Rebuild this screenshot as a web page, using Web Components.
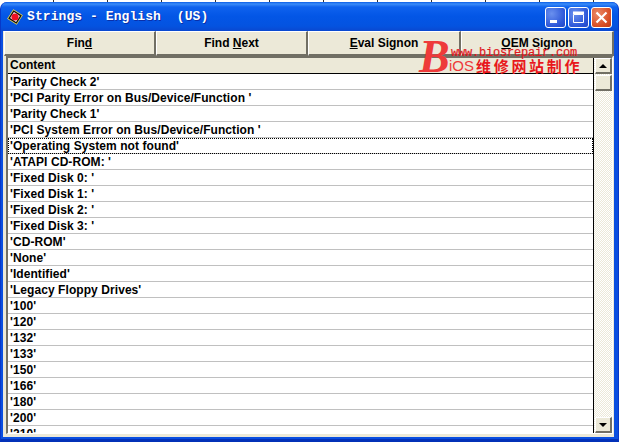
<!DOCTYPE html>
<html>
<head>
<meta charset="utf-8">
<style>
  html, body { margin: 0; padding: 0; width: 620px; height: 442px; overflow: hidden; background: #fff; }
</style>
</head>
<body>
<xp-window>
  <xp-titlebar slot="title">Strings - English&nbsp;&nbsp;(US)</xp-titlebar>
  <tool-button><span>Fin<u>d</u></span></tool-button>
  <tool-button><span>Find <u>N</u>ext</span></tool-button>
  <tool-button><span><u>E</u>val Signon</span></tool-button>
  <tool-button><span><u>O</u>EM Signon</span></tool-button>
  <string-list slot="list">
    <string-row><span>'Parity Check 2'</span></string-row>
    <string-row><span>'PCI Parity Error on Bus/Device/Function '</span></string-row>
    <string-row><span>'Parity Check 1'</span></string-row>
    <string-row><span>'PCI System Error on Bus/Device/Function '</span></string-row>
    <string-row focused><span>'Operating System not found'</span></string-row>
    <string-row><span>'ATAPI CD-ROM: '</span></string-row>
    <string-row><span>'Fixed Disk 0: '</span></string-row>
    <string-row><span>'Fixed Disk 1: '</span></string-row>
    <string-row><span>'Fixed Disk 2: '</span></string-row>
    <string-row><span>'Fixed Disk 3: '</span></string-row>
    <string-row><span>'CD-ROM'</span></string-row>
    <string-row><span>'None'</span></string-row>
    <string-row><span>'Identified'</span></string-row>
    <string-row><span>'Legacy Floppy Drives'</span></string-row>
    <string-row><span>'100'</span></string-row>
    <string-row><span>'120'</span></string-row>
    <string-row><span>'132'</span></string-row>
    <string-row><span>'133'</span></string-row>
    <string-row><span>'150'</span></string-row>
    <string-row><span>'166'</span></string-row>
    <string-row><span>'180'</span></string-row>
    <string-row><span>'200'</span></string-row>
    <string-row><span>'210'</span></string-row>
  </string-list>
  <bios-mark slot="mark"></bios-mark>
</xp-window>

<script>
class XpWindow extends HTMLElement {
  constructor() {
    super();
    const shadow = this.attachShadow({ mode: 'open' });
    shadow.innerHTML = `
      <style>
        :host { display: block; width: 620px; height: 442px; position: relative; background: #fff; overflow: hidden; }
        .ticks { height: 2px; background: repeating-linear-gradient(90deg, #fff 0 53px, #333 53px 54px); }
        .frame {
          height: 440px; box-sizing: border-box; margin-right: 1px;
          display: flex; flex-direction: column;
          background: #0a4fe0; border-radius: 7px 7px 0 0;
          border-bottom: 3px solid #0331b8; border-left: 1px solid #0838c8; border-right: 1px solid #0838c8;
        }
        .body {
          flex: 1; margin: 0 4px 2px 2px; min-height: 0;
          background: #ece9d8; display: flex; flex-direction: column;
        }
        .tools { display: grid; grid-template-columns: 152px 152px 153px 153px; height: 25px; padding-left: 1px; }
        .content { flex: 1; min-height: 0; padding: 0 1px 3px 3px; display: flex; }
        .mark { position: absolute; left: 418px; top: 40px; }
      </style>
      <div class="ticks"></div>
      <div class="frame">
        <slot name="title"></slot>
        <div class="body">
          <div class="tools"><slot></slot></div>
          <div class="content"><slot name="list"></slot></div>
        </div>
      </div>
      <div class="mark"><slot name="mark"></slot></div>
    `;
  }
}

class XpTitlebar extends HTMLElement {
  constructor() {
    super();
    const shadow = this.attachShadow({ mode: 'open' });
    shadow.innerHTML = `
      <style>
        :host {
          display: flex; align-items: center; height: 29px; flex: none; padding: 0 6px 0 6px;
          border-radius: 7px 7px 0 0;
          background: linear-gradient(180deg, #0a5ee8 0, #3b8cf8 2px, #0f62ee 5px, #0356e6 14px, #0453e0 24px, #0a48d0 29px);
        }
        .icon { width: 16px; height: 16px; flex: none; margin: 1px 4px 0 0; }
        .text {
          flex: 1; color: #fff; white-space: pre; padding-top: 1px;
          font: bold 13px/16px "Liberation Mono", monospace; letter-spacing: .08px;
          text-shadow: 1px 1px 0 #0a2fa8;
        }
        .btns { display: flex; gap: 2px; margin-top: 1px; }
        .btn {
          width: 21px; height: 21px; box-sizing: border-box; border: 1px solid #fff; border-radius: 3px;
          background: radial-gradient(circle at 30% 30%, #6a90ee, #2c56d8 70%, #2347c4);
        }
        .btn.x { background: radial-gradient(circle at 30% 30%, #ea8a68, #d94f26 65%, #bd3a14); }
        svg { display: block; }
      </style>
      <svg class="icon" viewBox="0 0 16 16">
        <polygon points="8,0 16,8 8,16 0,8" fill="#f0e050" transform="rotate(-12 8 8)"/>
        <polygon points="8,1 15,8 8,15 1,8" fill="#111" transform="rotate(-12 8 8)"/>
        <polygon points="8,3 13,8 8,13 3,8" fill="#fff" transform="rotate(-12 8 8)"/>
        <circle cx="8" cy="8" r="3.6" fill="#ee1122"/>
      </svg>
      <span class="text"><slot></slot></span>
      <div class="btns">
        <div class="btn"><svg width="19" height="19" viewBox="0 0 19 19"><rect x="4" y="12" width="7" height="3" fill="#fff"/></svg></div>
        <div class="btn"><svg width="19" height="19" viewBox="0 0 19 19"><path d="M4.5 6.5H14.5V14.5H4.5Z" fill="none" stroke="#fff" stroke-width="1"/><rect x="4" y="3.5" width="11" height="2.5" fill="#fff"/></svg></div>
        <div class="btn x"><svg width="19" height="19" viewBox="0 0 19 19"><path d="M4.5 4.5L14.5 14.5M14.5 4.5L4.5 14.5" stroke="#fff" stroke-width="2.2"/></svg></div>
      </div>
    `;
  }
}

class ToolButton extends HTMLElement {
  constructor() {
    super();
    const shadow = this.attachShadow({ mode: 'open' });
    shadow.innerHTML = `
      <style>
        :host {
          display: flex; align-items: center; justify-content: center; box-sizing: border-box; height: 25px;
          background: #ece9d8; color: #000;
          border-style: solid; border-width: 1px 2px 2px 1px;
          border-color: #fff #716f64 #716f64 #fff;
          font: bold 12px "Liberation Sans", Arial, sans-serif;
        }
      </style>
      <slot></slot>
    `;
  }
}

class StringRow extends HTMLElement {
  constructor() {
    super();
    const shadow = this.attachShadow({ mode: 'open' });
    shadow.innerHTML = `
      <style>
        :host {
          display: flex; align-items: center; box-sizing: border-box; height: 16px; flex: none; padding-left: 2px;
          border-bottom: 1px solid #c0c0c0; background: #fff; color: #000;
          font: bold 12px "Liberation Sans", Arial, sans-serif; letter-spacing: .07px;
        }
        :host([focused]) { outline: 1px dotted #000; outline-offset: -1px; }
      </style>
      <slot></slot>
    `;
  }
}

class ScrollBar extends HTMLElement {
  constructor() {
    super();
    const shadow = this.attachShadow({ mode: 'open' });
    shadow.innerHTML = `
      <style>
        :host {
          display: flex; flex-direction: column; width: 18px; flex: none; box-sizing: border-box; padding-left: 1px;
          background: #f6f4ec repeating-conic-gradient(#ece9d8 0 25%, #fff 0 50%) 0 0 / 2px 2px;
        }
        .b {
          height: 16px; flex: none; box-sizing: border-box; background: #ece9d8;
          border-style: solid; border-width: 1px 2px 2px 1px; border-color: #fff #716f64 #716f64 #fff;
          display: flex; align-items: center; justify-content: center;
        }
        .thumb { margin-top: 1px; }
        .grow { flex: 1; }
        .up { width: 0; height: 0; border: 4px solid transparent; border-top: 0; border-bottom-color: #000; }
        .down { width: 0; height: 0; border: 4px solid transparent; border-bottom: 0; border-top-color: #000; }
      </style>
      <div class="b"><div class="up"></div></div>
      <div class="b thumb"></div>
      <div class="grow"></div>
      <div class="b"><div class="down"></div></div>
    `;
  }
}

class StringList extends HTMLElement {
  constructor() {
    super();
    const shadow = this.attachShadow({ mode: 'open' });
    shadow.innerHTML = `
      <style>
        :host {
          display: flex; flex: 1; min-width: 0; box-sizing: border-box;
          border-style: solid; border-width: 2px 1px 1px 2px; border-color: #716f64 #fff #fff #716f64;
        }
        .table { flex: 1; min-width: 0; display: flex; flex-direction: column; overflow: hidden; border-right: 1px solid #000; background: #fff; }
        .head {
          height: 16px; flex: none; box-sizing: border-box; padding-left: 2px;
          background: #ece9d8; border-bottom: 1px solid #000;
          font: bold 12px/15px "Liberation Sans", Arial, sans-serif; color: #000;
        }
      </style>
      <div class="table">
        <div class="head">Content</div>
        <slot></slot>
      </div>
      <scroll-bar></scroll-bar>
    `;
  }
}

class BiosMark extends HTMLElement {
  constructor() {
    super();
    const shadow = this.attachShadow({ mode: 'open' });
    shadow.innerHTML = `
      <style>
        :host { display: block; position: relative; width: 170px; height: 36px; color: #ee3a3a; }
        span { position: absolute; white-space: pre; }
        .b { left: 1px; top: -6px; font: italic bold 46px/46px "Liberation Serif", serif; }
        .url { left: 33px; top: 7px; font: 12px/12px "Liberation Mono", monospace; letter-spacing: -.2px; color: #e0181c; -webkit-text-stroke: .2px #e0181c; }
        .ios { left: 31px; top: 18px; font: 15px/16px "Liberation Sans", sans-serif; }
        .cn { left: 58px; top: 17px; font: bold 15px/18px "Noto Sans CJK SC", sans-serif; letter-spacing: 2.7px; color: #e8181c; }
      </style>
      <span class="b">B</span>
      <span class="url">www.biosrepair.com</span>
      <span class="ios">iOS</span>
      <span class="cn">维修网站制作</span>
    `;
  }
}

customElements.define('xp-window', XpWindow);
customElements.define('xp-titlebar', XpTitlebar);
customElements.define('tool-button', ToolButton);
customElements.define('string-row', StringRow);
customElements.define('scroll-bar', ScrollBar);
customElements.define('string-list', StringList);
customElements.define('bios-mark', BiosMark);
</script>
</body>
</html>
